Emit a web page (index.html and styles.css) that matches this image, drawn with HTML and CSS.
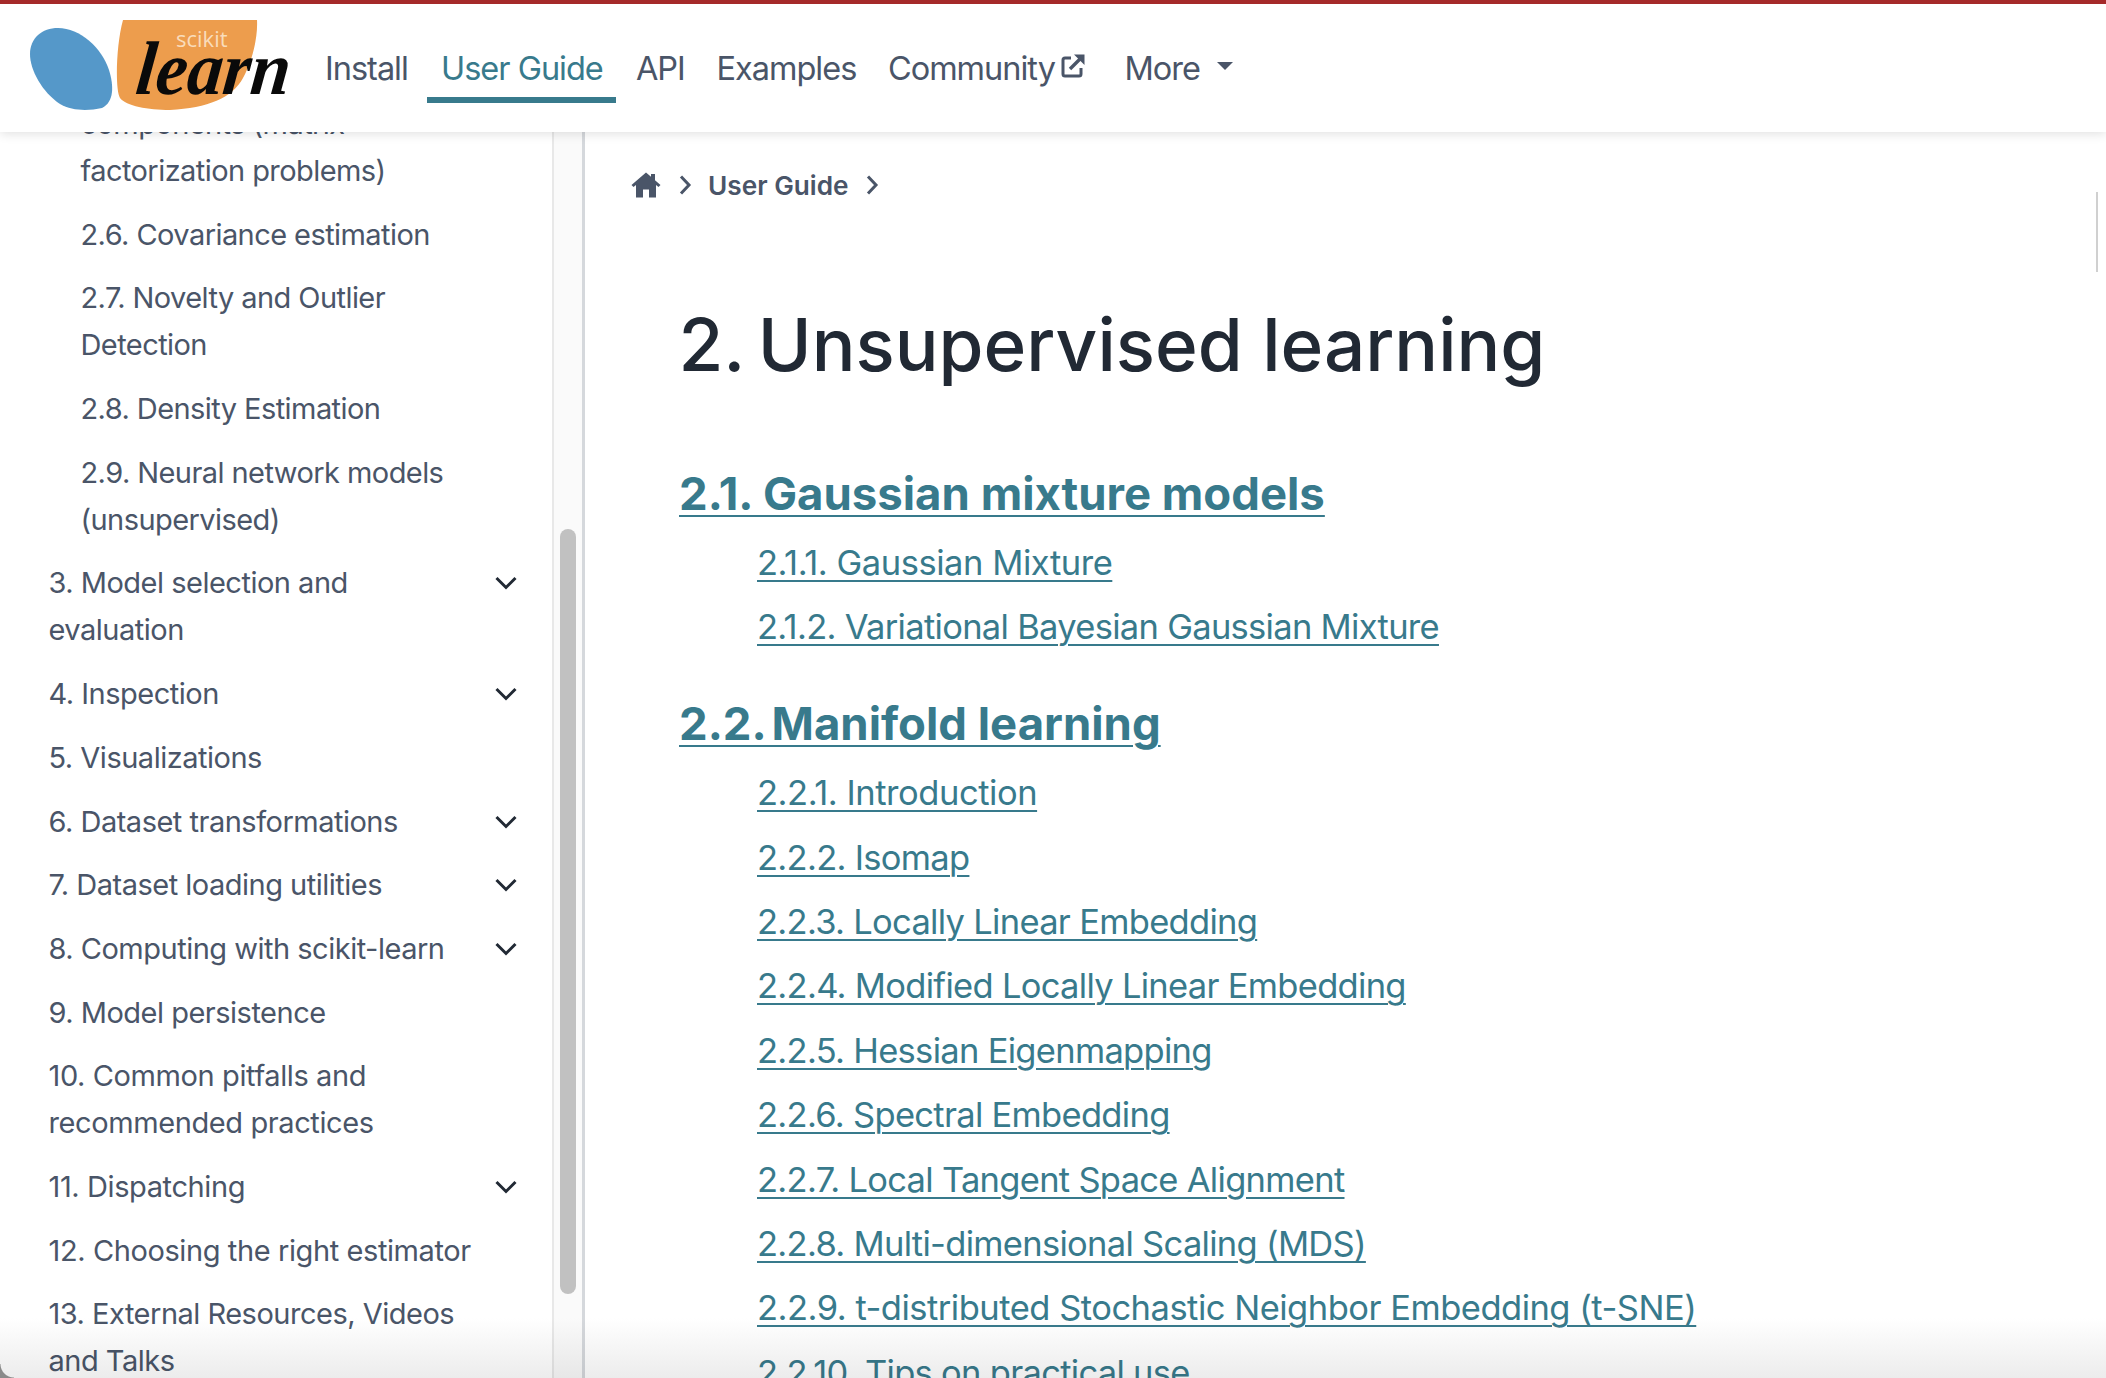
FILE: index.html
```html
<!DOCTYPE html>
<html lang="en">
<head>
<meta charset="utf-8">
<title>2. Unsupervised learning</title>
<link rel="stylesheet" href="styles.css">
</head>
<body>
<header class="topbar">
  <a class="logo" href="#">
    <svg width="270" height="100" viewBox="0 0 270 100">
      <path class="logo-blue" d="M28 8C50 8 72 28 79 50C84 66 84 82 72 88C58 91 42 91 30 84C12 72 0 50 0 34C0 18 12 8 28 8Z"/>
      <path class="logo-orange" d="M93 0H227C228 18 222 42 213 58C202 78 178 88 140 90C118 90 96 86 90 78C85 70 86 25 93 0Z"/>
      <text class="logo-scikit" x="146" y="27">scikit</text>
      <text class="logo-learn" x="104" y="74" textLength="154" lengthAdjust="spacingAndGlyphs" transform="skewX(-6) translate(8,0)">learn</text>
    </svg>
  </a>
  <nav class="nav">
    <a class="nav-item" href="#">Install</a>
    <a class="nav-item active" href="#">User Guide</a>
    <a class="nav-item" href="#">API</a>
    <a class="nav-item" href="#">Examples</a>
    <a class="nav-item" href="#">Community<svg class="ext" width="26" height="26" viewBox="0 0 26 26"><path d="M11 5H5a2 2 0 0 0-2 2v14a2 2 0 0 0 2 2h14a2 2 0 0 0 2-2v-6" fill="none" stroke="currentColor" stroke-width="3"/><path d="M10 16L21 5" fill="none" stroke="currentColor" stroke-width="3.4"/><path d="M14 1.500H24.500V12Z" fill="currentColor"/></svg></a>
    <a class="nav-item more" href="#">More<span class="caret"></span></a>
  </nav>
</header>
<div class="layout">
  <aside class="sidebar">
    <div class="side-scroll">
      <ul class="side-list">
        <li class="sub">2.5. Decomposing signals in components (matrix factorization problems)</li>
        <li class="sub">2.6. Covariance estimation</li>
        <li class="sub">2.7. Novelty and Outlier Detection</li>
        <li class="sub">2.8. Density Estimation</li>
        <li class="sub">2.9. Neural network models (unsupervised)</li>
        <li class="top exp"><span>3. Model selection and evaluation</span><svg class="chev" viewBox="0 0 22 14"><path d="M1.500 2L11 11.500L20.500 2"/></svg></li>
        <li class="top exp"><span>4. Inspection</span><svg class="chev" viewBox="0 0 22 14"><path d="M1.500 2L11 11.500L20.500 2"/></svg></li>
        <li class="top">5. Visualizations</li>
        <li class="top exp"><span>6. Dataset transformations</span><svg class="chev" viewBox="0 0 22 14"><path d="M1.500 2L11 11.500L20.500 2"/></svg></li>
        <li class="top exp"><span>7. Dataset loading utilities</span><svg class="chev" viewBox="0 0 22 14"><path d="M1.500 2L11 11.500L20.500 2"/></svg></li>
        <li class="top exp"><span>8. Computing with scikit-learn</span><svg class="chev" viewBox="0 0 22 14"><path d="M1.500 2L11 11.500L20.500 2"/></svg></li>
        <li class="top">9. Model persistence</li>
        <li class="top num-wide">10. Common pitfalls and recommended practices</li>
        <li class="top exp num-wide"><span>11. Dispatching</span><svg class="chev" viewBox="0 0 22 14"><path d="M1.500 2L11 11.500L20.500 2"/></svg></li>
        <li class="top num-wide">12. Choosing the right estimator</li>
        <li class="top">13. External Resources, Videos and Talks</li>
      </ul>
    </div>
    <div class="side-track"><div class="side-thumb"></div></div>
  </aside>
  <main class="main">
    <div class="crumbs">
      <svg class="home" width="30" height="26" viewBox="0 0 30 26"><path d="M15 0.500L0.500 13L2.500 15L5 13V25.500H12V17.500H18V25.500H25V13L27.500 15L29.500 13L24 8.300V2H20V4.800Z"/></svg>
      <svg class="crumb-chev" width="14" height="22" viewBox="0 0 14 22"><path d="M3 2.500L11 11L3 19.500"/></svg>
      <span class="crumb-text">User Guide</span>
      <svg class="crumb-chev" width="14" height="22" viewBox="0 0 14 22"><path d="M3 2.500L11 11L3 19.500"/></svg>
    </div>
    <h1 class="title"><span class="num">2.</span> Unsupervised learning</h1>
    <h2 class="section"><a href="#">2.1. Gaussian mixture models</a></h2>
    <ul class="links">
      <li class="loose"><a href="#">2.1.1. Gaussian Mixture</a></li>
      <li><a href="#">2.1.2. Variational Bayesian Gaussian Mixture</a></li>
    </ul>
    <h2 class="section"><a href="#"><span class="sec-num">2.2.</span> Manifold learning</a></h2>
    <ul class="links">
      <li class="loose"><a href="#">2.2.1. Introduction</a></li>
      <li><a href="#">2.2.2. Isomap</a></li>
      <li><a href="#">2.2.3. Locally Linear Embedding</a></li>
      <li><a href="#">2.2.4. Modified Locally Linear Embedding</a></li>
      <li><a href="#">2.2.5. Hessian Eigenmapping</a></li>
      <li><a href="#">2.2.6. Spectral Embedding</a></li>
      <li><a href="#">2.2.7. Local Tangent Space Alignment</a></li>
      <li><a href="#">2.2.8. Multi-dimensional Scaling (MDS)</a></li>
      <li class="looser"><a href="#">2.2.9. t-distributed Stochastic Neighbor Embedding (t-SNE)</a></li>
      <li><a href="#">2.2.10. Tips on practical use</a></li>
    </ul>
  </main>
  <div class="page-thumb"></div>
</div>
<div class="fade"></div>
<div class="corner"></div>
</body>
</html>
```
FILE: styles.css
```css
* { box-sizing: border-box; }
html, body { height: 100%; }
body {
  margin: 0;
  overflow: hidden;
  background: #fff;
  font-family: Inter, "Liberation Sans", sans-serif;
  color: #4a5568;
  display: flex;
  flex-direction: column;
}
a { color: inherit; text-decoration: none; }
ul { list-style: none; margin: 0; padding: 0; }

.topbar {
  flex: none;
  height: 132px;
  display: flex;
  align-items: flex-start;
  padding-left: 30px;
  background: #fff;
  border-top: 4px solid #a52a2a;
  box-shadow: 0 2px 10px rgba(0,0,0,.12);
  position: relative;
  z-index: 2;
}
.logo { display: block; margin-top: 16px; width: 270px; height: 100px; flex: none; }
.logo svg { display: block; overflow: visible; }
.logo-blue { fill: #5598c9; }
.logo-orange { fill: #ed9d4d; }
.logo-scikit { fill: #f9dcbb; font-size: 22px; font-family: "Open Sans", sans-serif; }
.logo-learn { fill: #0a0a0a; font-family: "Liberation Serif", serif; font-style: italic; font-weight: 700; font-size: 76px; }

.nav { display: flex; gap: 7.600px; margin-left: 13px; height: 99px; }
.nav-item {
  display: flex;
  align-items: center;
  gap: 5px;
  height: 99px;
  padding: 35px 12px 0;
  font-size: 32.500px;
  letter-spacing: -1px;
  border-bottom: 6px solid transparent;
}
.nav-item.active { color: #387a8c; border-bottom-color: #387a8c; padding-left: 13.500px; padding-right: 13.500px; }
.nav-item.more { gap: 17px; margin-left: 7px; }
.ext { margin-bottom: 4px; color: #4a5568; }
.caret { width: 0; height: 0; border-left: 8.500px solid transparent; border-right: 8.500px solid transparent; border-top: 8px solid #4a5568; margin-bottom: 4px; }

.layout { flex: 1; min-height: 0; display: flex; position: relative; }
.sidebar { flex: none; width: 585px; display: flex; overflow: hidden; }
.side-scroll { width: 552px; overflow: hidden; }
.side-list { margin-top: -79px; font-size: 29px; letter-spacing: -0.570px; line-height: 47px; }
.side-list li { margin-bottom: 16.700px; padding-right: 60px; }
.side-list .sub { padding-left: 80.500px; padding-right: 70px; }
.side-list .top { padding-left: 48.500px; letter-spacing: -0.500px; }
.side-list .top.num-wide { letter-spacing: -0.400px; }
.side-list .exp { display: flex; justify-content: space-between; align-items: flex-start; padding-right: 35px; }
.side-list .exp span { max-width: 420px; }
.chev { width: 22px; height: 14px; flex: none; margin-top: 17px; fill: none; stroke: #212934; stroke-width: 3; }
.side-track {
  width: 33px;
  background: #fafafa;
  border-left: 2px solid #e8e8e8;
  border-right: 3px solid #d5d8dc;
  position: relative;
}
.side-thumb { position: absolute; left: 6px; top: 397px; width: 16px; height: 765px; background: #c1c1c1; border-radius: 8px; }

.main { flex: 1; min-width: 0; padding-left: 47px; overflow: hidden; color: #387a8c; }
.crumbs { display: flex; align-items: center; height: 26px; margin-top: 40px; color: #4a5568; }
.home { fill: #4a5568; flex: none; margin-left: -1px; }
.crumb-chev { fill: none; stroke: #4a5568; stroke-width: 3; margin-left: 17px; }
.crumb-text { font-size: 26.200px; font-weight: 600; margin-left: 16px; }
.title { margin: 104px 0 78.500px 46.500px; font-size: 72.800px; line-height: 86px; font-weight: 500; color: #212934; }
.num { margin-right: -7px; }
.section { margin: 46.500px 0 0 47px; font-size: 45.500px; line-height: 54px; font-weight: 700; }
.sec-num { margin-right: -6px; }
.section a, .links a { text-decoration: underline; text-decoration-thickness: 2px; text-underline-offset: 5px; }
.links { margin-left: 125px; padding-top: 1px; font-size: 34.500px; letter-spacing: -0.700px; line-height: 46px; }
.links li { margin-top: 18.400px; }
.links .loose { letter-spacing: -0.450px; }
.links .looser { letter-spacing: -0.500px; }
.page-thumb { position: absolute; right: 8px; top: 60px; width: 2px; height: 80px; background: #d0d0d0; }
.fade { position: fixed; left: 0; right: 0; bottom: 0; height: 60px; background: linear-gradient(to bottom, #fff, #ececec); mix-blend-mode: multiply; pointer-events: none; z-index: 3; }
.corner { position: fixed; left: 0; bottom: 0; width: 14px; height: 14px; background: radial-gradient(circle at 100% 0, transparent 13px, #8a8a8a 14px); z-index: 4; }
```
